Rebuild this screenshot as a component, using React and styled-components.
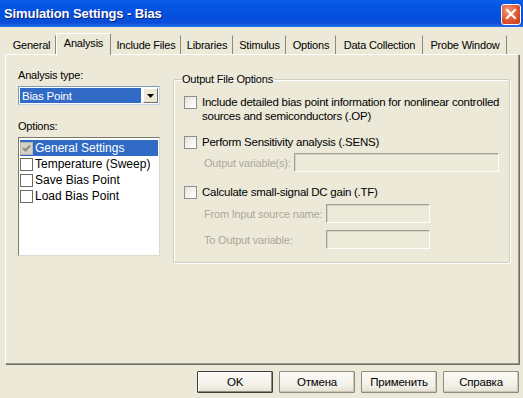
import styled, { createGlobalStyle } from 'styled-components';

const GlobalStyle = createGlobalStyle`
  html, body {
    margin: 0;
    padding: 0;
    background: #ece9d8;
  }
  * {
    box-sizing: border-box;
  }
`;

const Window = styled.div`
  width: 523px;
  height: 398px;
  background: #ece9d8;
  font-family: 'Liberation Sans', Arial, sans-serif;
  font-size: 11px;
  letter-spacing: -0.2px;
  color: #000;
  display: flex;
  flex-direction: column;
  overflow: hidden;
`;

const TitleBar = styled.div`
  height: 27px;
  flex: none;
  display: flex;
  align-items: center;
  justify-content: space-between;
  padding: 0 2px 0 4px;
  background: linear-gradient(
    to bottom,
    #0a5fe8 0%,
    #0655e3 20%,
    #0350dd 60%,
    #0b4ed8 85%,
    #2a73ec 100%
  );
`;

const Title = styled.div`
  color: #fff;
  font-weight: bold;
  font-size: 13px;
  letter-spacing: -0.1px;
  text-shadow: 1px 1px 0 #0a1e7a;
`;

const CloseButton = styled.div`
  width: 20px;
  height: 21px;
  border: 1px solid #fff;
  border-radius: 3px;
  background: radial-gradient(circle at 35% 30%, #f09a7d 0%, #e0552f 55%, #c8391a 100%);
  display: flex;
  align-items: center;
  justify-content: center;
  margin-top: 1px;
`;

const TabStrip = styled.div`
  display: flex;
  align-items: flex-end;
  height: 21px;
  margin: 6px 0 0 7px;
  flex: none;
`;

const Tab = styled.div`
  width: ${(p) => p.$width}px;
  height: ${(p) => (p.$active ? '22px' : '19px')};
  margin-bottom: ${(p) => (p.$active ? '-1px' : '0')};
  padding-bottom: ${(p) => (p.$active ? '3px' : '0')};
  display: flex;
  align-items: center;
  justify-content: center;
  border-right: 1px solid #8c8a80;
  border-left: 1px solid ${(p) => (p.$active ? '#fff' : 'transparent')};
  border-top: 1px solid ${(p) => (p.$active ? '#fff' : 'transparent')};
  background: #ece9d8;
  position: relative;
  z-index: ${(p) => (p.$active ? 2 : 1)};
  white-space: nowrap;
`;

const Panel = styled.div`
  margin: 0 4px 0 5px;
  height: 310px;
  flex: none;
  border-top: 1px solid #fff;
  border-left: 1px solid #fff;
  border-right: 1px solid #9d9a8c;
  border-bottom: 1px solid #9d9a8c;
  box-shadow: 1px 1px 0 #716f64;
  display: flex;
  padding: 14px 0 0 12px;
  gap: 13px;
`;

const LeftColumn = styled.div`
  width: 142px;
  display: flex;
  flex-direction: column;
`;

const Label = styled.div`
  line-height: 13px;
  margin-top: ${(p) => p.$gap || 0}px;
  color: #000;
  white-space: nowrap;
`;

const Combo = styled.div`
  margin-top: 4px;
  height: 19px;
  display: flex;
  align-items: stretch;
  border-top: 1px solid #7f9db9;
  border-left: 1px solid #7f9db9;
  border-right: 1px solid #c3d3e3;
  border-bottom: 1px solid #c3d3e3;
  background: #fff;
  padding: 1px;
`;

const ComboValue = styled.div`
  flex: 1;
  background: #316ac5;
  color: #fff;
  display: flex;
  align-items: center;
  padding-left: 2px;
  margin-right: 2px;
  font-size: 11.5px;
`;

const ComboArrow = styled.div`
  width: 15px;
  background: #ece9d8;
  border-top: 1px solid #fff;
  border-left: 1px solid #fff;
  border-right: 1px solid #716f64;
  border-bottom: 1px solid #716f64;
  display: flex;
  align-items: center;
  justify-content: center;
`;

const ListBox = styled.div`
  margin-top: 4px;
  height: 119px;
  background: #fff;
  border-top: 1px solid #7a786c;
  border-left: 1px solid #7a786c;
  border-right: 1px solid #dcdacc;
  border-bottom: 1px solid #dcdacc;
  padding: 2px 1px;
`;

const ListItem = styled.div`
  height: 16px;
  display: flex;
  align-items: center;
  gap: 2px;
  background: ${(p) => (p.$selected ? '#316ac5' : 'transparent')};
  color: ${(p) => (p.$selected ? '#fff' : '#000')};
  font-size: 12px;
  letter-spacing: 0;
  white-space: nowrap;
`;

const ListCheck = styled.span`
  width: 13px;
  height: 13px;
  flex: none;
  background: ${(p) => (p.$checked ? '#d4d0c8' : '#fff')};
  border: 1px solid ${(p) => (p.$checked ? '#b9b6aa' : '#6d6b62')};
  display: flex;
  align-items: center;
  justify-content: center;
`;

const GroupBox = styled.fieldset`
  margin: 4px 0 0 0;
  padding: 5px 0 0 10px;
  width: 337px;
  height: 190px;
  border: 1px solid #d0cebf;
  box-shadow: inset 1px 1px 0 #fff, 1px 1px 0 #fff;
  border-radius: 2px;
  display: flex;
  flex-direction: column;
`;

const Legend = styled.legend`
  padding: 0 1px;
  margin-left: -3px;
  line-height: 13px;
`;

const OptionRow = styled.div`
  display: flex;
  align-items: flex-start;
  gap: 5px;
  margin-top: ${(p) => p.$gap || 0}px;
`;

const CheckBox = styled.span`
  width: 13px;
  height: 13px;
  flex: none;
  margin-top: 1px;
  border: 1px solid #8e8f8f;
  background: linear-gradient(135deg, #e2e1da 0%, #f7f6f1 60%, #ffffff 100%);
`;

const OptionText = styled.div`
  line-height: 14px;
  font-size: 11.5px;
  letter-spacing: -0.25px;
  white-space: nowrap;
`;

const FieldRow = styled.div`
  display: flex;
  align-items: center;
  margin-top: ${(p) => p.$gap || 0}px;
  padding-left: 20px;
`;

const FieldLabel = styled.div`
  width: ${(p) => (p.$width ? `${p.$width}px` : 'auto')};
  color: #aca899;
  font-size: 11px;
  letter-spacing: -0.2px;
  white-space: nowrap;
`;

const DisabledInput = styled.div`
  width: ${(p) => p.$width}px;
  height: 19px;
  margin-left: ${(p) => p.$offset || 0}px;
  background: #ecead9;
  border-top: 1px solid #a19f93;
  border-left: 1px solid #a19f93;
  border-right: 1px solid #fdfdf9;
  border-bottom: 1px solid #fdfdf9;
  box-shadow: inset 1px 1px 0 #d8d5c4;
`;

const Footer = styled.div`
  display: flex;
  justify-content: flex-end;
  gap: 6px;
  padding: 7px 4px 0 0;
`;

const Button = styled.div`
  width: 76px;
  height: 22px;
  display: flex;
  align-items: center;
  justify-content: center;
  font-size: 11.5px;
  background: linear-gradient(to bottom, #fbfaf6 0%, #f1efe6 70%, #e3e0d2 100%);
  border: 1px solid ${(p) => (p.$default ? '#3f3e38' : '#8f8d82')};
  box-shadow: ${(p) =>
    p.$default ? 'inset -1px -1px 0 #8d8b7f, inset 1px 1px 0 #fff' : 'inset -1px -1px 0 #c9c6b6'};
  border-radius: 1px;
`;

const tabs = [
  { label: 'General', width: 49 },
  { label: 'Analysis', width: 55 },
  { label: 'Include Files', width: 70 },
  { label: 'Libraries', width: 52 },
  { label: 'Stimulus', width: 53 },
  { label: 'Options', width: 50 },
  { label: 'Data Collection', width: 87 },
  { label: 'Probe Window', width: 84 },
];

const listItems = [
  { label: 'General Settings', checked: true },
  { label: 'Temperature (Sweep)' },
  { label: 'Save Bias Point' },
  { label: 'Load Bias Point' },
];

export default function App() {
  return (
    <>
      <GlobalStyle />
      <Window>
        <TitleBar>
          <Title>Simulation Settings - Bias</Title>
          <CloseButton>
            <svg width="12" height="12" viewBox="0 0 12 12">
              <path d="M2 2 L10 10 M10 2 L2 10" stroke="#fff" strokeWidth="2.2" strokeLinecap="square" />
            </svg>
          </CloseButton>
        </TitleBar>

        <TabStrip>
          {tabs.map((t) => (
            <Tab key={t.label} $width={t.width} $active={t.label === 'Analysis'}>
              {t.label}
            </Tab>
          ))}
        </TabStrip>

        <Panel>
          <LeftColumn>
            <Label>Analysis type:</Label>
            <Combo>
              <ComboValue>Bias Point</ComboValue>
              <ComboArrow>
                <svg width="7" height="4" viewBox="0 0 7 4">
                  <path d="M0 0 H7 L3.5 4 Z" fill="#000" />
                </svg>
              </ComboArrow>
            </Combo>

            <Label $gap={15}>Options:</Label>
            <ListBox>
              {listItems.map((it, i) => (
                <ListItem key={it.label} $selected={i === 0}>
                  <ListCheck $checked={it.checked}>
                    {it.checked && (
                      <svg width="9" height="9" viewBox="0 0 9 9">
                        <path d="M1 4 L3.5 6.5 L8 1.5" stroke="#8f8d85" strokeWidth="2" fill="none" />
                      </svg>
                    )}
                  </ListCheck>
                  {it.label}
                </ListItem>
              ))}
            </ListBox>
          </LeftColumn>

          <GroupBox>
            <Legend>Output File Options</Legend>

            <OptionRow $gap={4}>
              <CheckBox />
              <OptionText>
                Include detailed bias point information for nonlinear controlled
                <br />
                sources and semiconductors (.OP)
              </OptionText>
            </OptionRow>

            <OptionRow $gap={12}>
              <CheckBox />
              <OptionText>Perform Sensitivity analysis (.SENS)</OptionText>
            </OptionRow>
            <FieldRow $gap={4}>
              <FieldLabel>Output variable(s):</FieldLabel>
              <DisabledInput $width={205} $offset={3} />
            </FieldRow>

            <OptionRow $gap={13}>
              <CheckBox />
              <OptionText>Calculate small-signal DC gain (.TF)</OptionText>
            </OptionRow>
            <FieldRow $gap={5}>
              <FieldLabel $width={122}>From Input source name:</FieldLabel>
              <DisabledInput $width={104} />
            </FieldRow>
            <FieldRow $gap={7}>
              <FieldLabel $width={122}>To Output variable:</FieldLabel>
              <DisabledInput $width={104} />
            </FieldRow>
          </GroupBox>
        </Panel>

        <Footer>
          <Button $default>OK</Button>
          <Button>Отмена</Button>
          <Button>Применить</Button>
          <Button>Справка</Button>
        </Footer>
      </Window>
    </>
  );
}
